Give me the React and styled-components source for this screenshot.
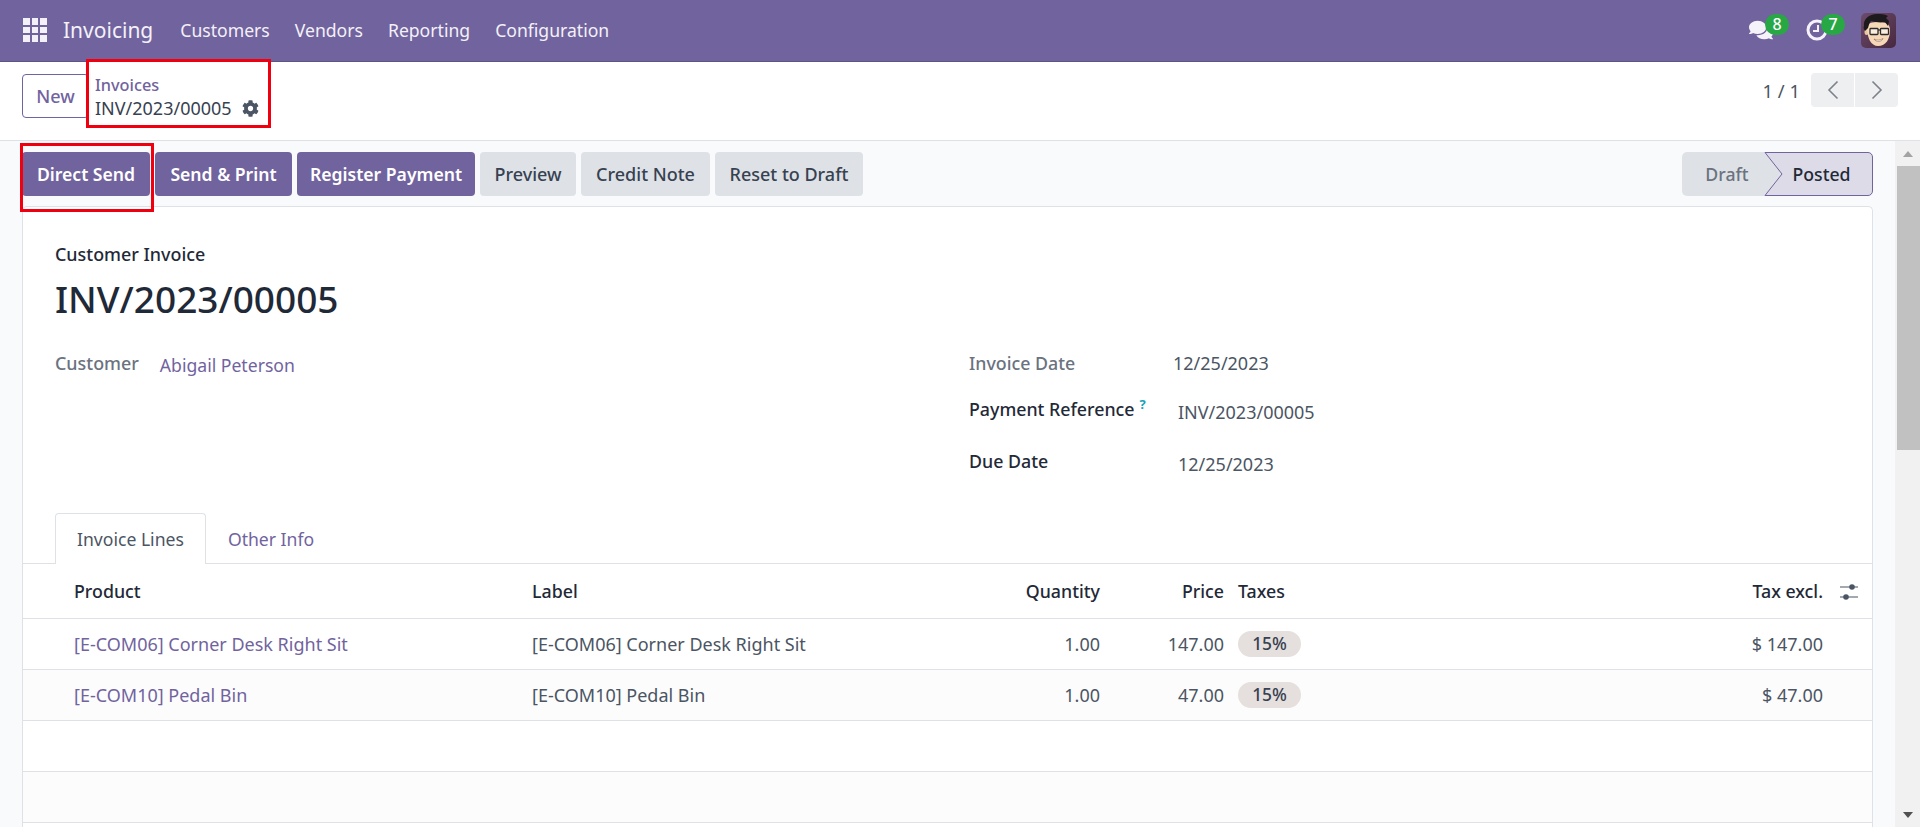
import React from 'react'
import styled, { createGlobalStyle } from 'styled-components'
import { FaCog, FaComments } from 'react-icons/fa'

const GlobalStyle = createGlobalStyle`
  html, body { margin: 0; padding: 0; height: 100%; overflow: hidden; }
  body { font-family: "Noto Sans", "Open Sans", sans-serif; font-size: 18px; color: #374151; background: #f9fafb; }
  * { box-sizing: border-box; }
`

const purple = '#71639e'

const Page = styled.div`
  position: relative;
  width: 1920px;
  height: 827px;
  display: flex;
  flex-direction: column;
  overflow: hidden;
`

const Navbar = styled.header`
  height: 62px;
  flex: none;
  display: flex;
  align-items: center;
  padding: 0 24px 1px 23px;
  background: ${purple};
  border-bottom: 1px solid #5f5386;
  color: #fff;
`

const AppGrid = styled.div`
  width: 24px;
  height: 24px;
  display: grid;
  grid-template-columns: repeat(3, 6.6px);
  grid-auto-rows: 6.6px;
  gap: 2px;
  margin-right: 16px;
  span { background: #f3f1f7; }
`

const Brand = styled.div`
  font-size: 21px;
  margin-right: 27px;
  color: #f3f1f7;
`

const MainMenu = styled.nav`
  display: flex;
  gap: 25px;
  font-size: 17.6px;
  color: #f3f1f7;
`

const Systray = styled.div`
  margin-left: auto;
  display: flex;
  align-items: center;
`

const TrayIcon = styled.div`
  position: relative;
  width: 24px;
  height: 24px;
  margin-right: 32px;
  display: flex;
  align-items: center;
  justify-content: center;
  color: #f5f3f9;
`

const Badge = styled.span`
  position: absolute;
  left: 16px;
  top: -4px;
  width: 24px;
  height: 21px;
  border-radius: 11px;
  background: #28a745;
  color: #fff;
  font-size: 16px;
  font-weight: 500;
  line-height: 20px;
  text-align: center;
`

const Avatar = styled.svg`
  width: 35px;
  height: 35px;
  display: block;
`

const ControlPanel = styled.div`
  height: 79px;
  flex: none;
  display: flex;
  align-items: flex-start;
  padding: 12px 22px 0;
  background: #fff;
  border-bottom: 1px solid #dee2e6;
`

const NewButton = styled.button`
  height: 44px;
  width: 67px;
  flex: none;
  border: 1px solid ${purple};
  border-radius: 4px;
  background: #fff;
  color: ${purple};
  font: 500 18px "Noto Sans", sans-serif;
`

const Breadcrumb = styled.div`
  margin-left: 6px;
  line-height: 23px;
`

const CrumbLink = styled.div`
  color: ${purple};
  font-size: 16.3px;
  font-weight: 500;
`

const CrumbCurrent = styled.div`
  display: flex;
  align-items: center;
  gap: 10px;
  font-size: 18px;
  color: #374151;
  svg { color: #4b5563; }
`

const Pager = styled.div`
  margin-left: auto;
  margin-top: -1px;
  display: flex;
  align-items: center;
  gap: 11px;
  font-size: 18.4px;
  color: #4b5563;
`

const PagerGroup = styled.div`
  display: flex;
  gap: 1px;
`

const PagerButton = styled.button`
  width: 43px;
  height: 34px;
  padding: 0;
  border: 0;
  border-radius: ${p => p.$side === 'left' ? '4px 0 0 4px' : '0 4px 4px 0'};
  background: #eeeff1;
  display: flex;
  align-items: center;
  justify-content: center;
`

const Body = styled.div`
  flex: 1;
  min-height: 0;
  display: flex;
`

const Content = styled.main`
  flex: 1;
  min-width: 0;
  padding: 11px 22px 0;
  background: #f9fafb;
`

const ActionBar = styled.div`
  display: flex;
  align-items: center;
  height: 44px;
  gap: 5px;
`

const ActionButton = styled.button`
  height: 44px;
  padding: 0;
  width: ${p => p.$w}px;
  border: 0;
  border-radius: 4px;
  background: ${p => p.$primary ? purple : '#dee2e6'};
  color: ${p => p.$primary ? '#fff' : '#374151'};
  font: ${p => p.$primary ? 600 : 500} ${p => p.$primary ? 17.6 : 18}px "Noto Sans", sans-serif;
`

const StatusBar = styled.div`
  margin-left: auto;
  width: 191px;
  height: 44px;
  position: relative;
  display: flex;
  font-size: 17.7px;
  font-weight: 500;
`

const StatusArrow = styled.svg`
  position: absolute;
  inset: 0;
  width: 191px;
  height: 44px;
`

const StatusLabel = styled.span`
  position: relative;
  width: ${p => p.$w}px;
  flex: none;
  line-height: 44px;
  text-align: center;
  padding-right: ${p => p.$pad}px;
  color: ${p => p.$muted ? '#6b7280' : '#1f2937'};
`

const Sheet = styled.section`
  margin-top: 10px;
  height: 640px;
  background: #fff;
  border: 1px solid #dee2e6;
  border-bottom: 0;
  border-radius: 5px 5px 0 0;
`

const Heading = styled.div`
  padding: 35px 32px 0;
`

const Eyebrow = styled.div`
  font-size: 17.9px;
  line-height: 24px;
  font-weight: 500;
  color: #1f2937;
`

const Title = styled.h1`
  margin: 8px 0 0;
  font-size: 37px;
  line-height: 50px;
  font-weight: 500;
  color: #1f2937;
`

const Columns = styled.div`
  margin-top: 27px;
  padding-left: 32px;
  display: grid;
  grid-template-columns: 914px 1fr;
  height: 162px;
`

const LeftField = styled.div`
  display: flex;
  align-items: flex-start;
  gap: 21px;
`

const GreyLabel = styled.div`
  font-size: 17.9px;
  line-height: 24px;
  font-weight: 500;
  color: #6b7280;
`

const PartnerLink = styled.div`
  font-size: 17.6px;
  line-height: 24px;
  margin-top: 2px;
  color: ${purple};
`

const FieldRow = styled.div`
  display: flex;
  height: ${p => p.$h}px;
`

const FieldLabel = styled.div`
  width: ${p => p.$w}px;
  flex: none;
  font-size: 17.8px;
  line-height: 24px;
  font-weight: 500;
  color: ${p => p.$muted ? '#6b7280' : '#1f2937'};
`

const FieldValue = styled.div`
  font-size: 18px;
  line-height: 24px;
  margin-top: ${p => p.$top}px;
  color: #4b5563;
`

const Help = styled.sup`
  font-size: 13px;
  font-weight: 700;
  color: #17a2b8;
  margin-left: 5px;
  line-height: 0;
`

const Tabs = styled.div`
  height: 51px;
  padding-left: 32px;
  display: flex;
  border-bottom: 1px solid #dee2e6;
  font-size: 17.6px;
`

const Tab = styled.div`
  height: 51px;
  line-height: ${p => p.$active ? 50 : 52}px;
  padding: 0 ${p => p.$pad}px;
  color: ${p => p.$active ? '#4b5563' : purple};
  ${p => p.$active && `
    background: #fff;
    border: 1px solid #dee2e6;
    border-bottom: 0;
    border-radius: 4px 4px 0 0;
  `}
`

const Row = styled.div`
  height: ${p => p.$h || 51}px;
  display: grid;
  grid-template-columns: 51px 458px 478px 90px 124px 14px 1fr 120px 49px;
  align-items: center;
  font-size: 18px;
  background: ${p => p.$odd ? '#fcfcfc' : '#fff'};
  border-bottom: 1px solid #dee2e6;
  color: #4b5563;
`

const HeaderRow = styled(Row)`
  font-size: 17.8px;
  color: #1f2937;
  font-weight: 500;
`

const Cell = styled.div`
  white-space: nowrap;
  text-align: ${p => p.$right ? 'right' : 'left'};
  color: ${p => p.$link ? purple : 'inherit'};
`

const TaxBadge = styled.span`
  display: inline-block;
  width: 63px;
  height: 26px;
  line-height: 25px;
  border-radius: 13px;
  background: #e5dfdd;
  color: #374151;
  font-size: 17.4px;
  font-weight: 500;
  text-align: center;
`

const OptionsIcon = styled.svg`
  width: 20px;
  height: 18px;
  display: block;
  margin-left: 16px;
`

const Scrollbar = styled.div`
  width: 25px;
  flex: none;
  display: flex;
  flex-direction: column;
  align-items: center;
  background: #f1f1f1;
`

const ArrowBtn = styled.div`
  height: 25px;
  width: 100%;
  display: flex;
  align-items: center;
  justify-content: center;
  flex: none;
`

const Tri = styled.i`
  width: 0;
  height: 0;
  border-left: 5.5px solid transparent;
  border-right: 5.5px solid transparent;
  ${p => p.$up ? 'border-bottom: 6px solid #a3a3a3;' : 'border-top: 6px solid #505050;'}
`

const Thumb = styled.div`
  width: 23px;
  margin-left: 2px;
  height: 284px;
  flex: none;
  background: #c1c1c1;
`

const Spacer = styled.div`
  flex: 1;
`

const RedBox = styled.div`
  position: absolute;
  left: ${p => p.$x}px;
  top: ${p => p.$y}px;
  width: ${p => p.$w}px;
  height: ${p => p.$h}px;
  border: 3px solid #f0000f;
  pointer-events: none;
`

const lines = [
  { code: '[E-COM06] Corner Desk Right Sit', price: '147.00', total: '$ 147.00' },
  { code: '[E-COM10] Pedal Bin', price: '47.00', total: '$ 47.00' },
]

const Chevron = ({ dir }) => (
  <svg width="14" height="20" viewBox="0 0 14 20" fill="none" stroke="#7d8288" strokeWidth="1.6">
    <path d={dir === 'left' ? 'M11.5 1.5 3 10l8.5 8.5' : 'M2.5 1.5 11 10l-8.5 8.5'} />
  </svg>
)

const ClockIcon = () => (
  <svg width="24" height="24" viewBox="0 0 24 24" fill="none" stroke="#f5f3f9">
    <circle cx="12" cy="12" r="9" strokeWidth="3" />
    <path d="M13 7v6H8" strokeWidth="2" />
  </svg>
)

const AvatarArt = () => (
  <Avatar viewBox="0 0 35 35">
    <defs>
      <linearGradient id="avatarBg" x1="0" y1="0" x2="1" y2="1">
        <stop offset="0" stopColor="#6d4c6c" />
        <stop offset="1" stopColor="#48273f" />
      </linearGradient>
    </defs>
    <rect width="35" height="35" rx="5" fill="url(#avatarBg)" />
    <ellipse cx="5.5" cy="19" rx="2" ry="3" fill="#ecc49e" />
    <path d="M6 14c0 11 4 19 11 19 8 0 12-7 12-16 0-6-4-8-11-8S6 10 6 14z" fill="#f7d8b6" />
    <path d="M3 13C2 6 8 1 16 1c4 0 7 0 11 2l-2 2 3 3-1 5-3-4c-5 1-10 0-14-1-2 2-2 4-3 7l-3 3c-1-2-2-3-1-5z" fill="#1d1a1e" />
    <rect x="9" y="15.500" width="8" height="6" rx=".8" fill="#fff" fillOpacity=".55" stroke="#2c2c2c" strokeWidth="1.3" />
    <rect x="19.500" y="15.500" width="8" height="6" rx=".8" fill="#fff" fillOpacity=".55" stroke="#2c2c2c" strokeWidth="1.3" />
    <path d="M17 17h2.500" stroke="#2c2c2c" strokeWidth="1.2" />
    <path d="M13 26c3 1.500 6 1.500 9-.5-1 3.500-7 4-9 .5z" fill="#fff" stroke="#7a4a3a" strokeWidth=".5" />
  </Avatar>
)

const SlidersArt = () => (
  <OptionsIcon viewBox="0 0 20 18" fill="#4b5563" stroke="#4b5563">
    <path d="M1 5h18M1 15h18" strokeWidth="1.2" />
    <circle cx="13" cy="5" r="2.8" stroke="none" />
    <circle cx="7" cy="15" r="2.8" stroke="none" />
  </OptionsIcon>
)

export default function App() {
  return (
    <Page>
      <GlobalStyle />
      <Navbar>
        <AppGrid>{Array.from({ length: 9 }, (_, i) => <span key={i} />)}</AppGrid>
        <Brand>Invoicing</Brand>
        <MainMenu>
          <span>Customers</span>
          <span>Vendors</span>
          <span>Reporting</span>
          <span>Configuration</span>
        </MainMenu>
        <Systray>
          <TrayIcon>
            <FaComments size={24} />
            <Badge>8</Badge>
          </TrayIcon>
          <TrayIcon>
            <ClockIcon />
            <Badge>7</Badge>
          </TrayIcon>
          <AvatarArt />
        </Systray>
      </Navbar>

      <ControlPanel>
        <NewButton>New</NewButton>
        <Breadcrumb>
          <CrumbLink>Invoices</CrumbLink>
          <CrumbCurrent>INV/2023/00005 <FaCog size={17} /></CrumbCurrent>
        </Breadcrumb>
        <Pager>
          <span>1 / 1</span>
          <PagerGroup>
            <PagerButton $side="left"><Chevron dir="left" /></PagerButton>
            <PagerButton $side="right"><Chevron dir="right" /></PagerButton>
          </PagerGroup>
        </Pager>
      </ControlPanel>

      <Body>
        <Content>
          <ActionBar>
            <ActionButton $primary $w={128}>Direct Send</ActionButton>
            <ActionButton $primary $w={137}>Send &amp; Print</ActionButton>
            <ActionButton $primary $w={178}>Register Payment</ActionButton>
            <ActionButton $w={96}>Preview</ActionButton>
            <ActionButton $w={129}>Credit Note</ActionButton>
            <ActionButton $w={148}>Reset to Draft</ActionButton>
            <StatusBar>
              <StatusArrow viewBox="0 0 191 44">
                <path d="M5 0h79l17 22-17 22H5a5 5 0 0 1-5-5V5a5 5 0 0 1 5-5z" fill="#dee2e6" />
                <path d="M83 .5h103a4.5 4.5 0 0 1 4.5 4.5v34a4.5 4.5 0 0 1-4.5 4.5H83L100 22z" fill="#dedbe8" stroke={purple} />
              </StatusArrow>
              <StatusLabel $muted $w={101} $pad={11}>Draft</StatusLabel>
              <StatusLabel $w={90} $pad={13}>Posted</StatusLabel>
            </StatusBar>
          </ActionBar>

          <Sheet>
            <Heading>
              <Eyebrow>Customer Invoice</Eyebrow>
              <Title>INV/2023/00005</Title>
            </Heading>
            <Columns>
              <LeftField>
                <GreyLabel>Customer</GreyLabel>
                <PartnerLink>Abigail Peterson</PartnerLink>
              </LeftField>
              <div>
                <FieldRow $h={46}>
                  <FieldLabel $muted $w={204}>Invoice Date</FieldLabel>
                  <FieldValue $top={0}>12/25/2023</FieldValue>
                </FieldRow>
                <FieldRow $h={52}>
                  <FieldLabel $w={209}>Payment Reference<Help>?</Help></FieldLabel>
                  <FieldValue $top={3}>INV/2023/00005</FieldValue>
                </FieldRow>
                <FieldRow $h={50}>
                  <FieldLabel $w={209}>Due Date</FieldLabel>
                  <FieldValue $top={3}>12/25/2023</FieldValue>
                </FieldRow>
              </div>
            </Columns>
            <Tabs>
              <Tab $active $pad={21}>Invoice Lines</Tab>
              <Tab $pad={22}>Other Info</Tab>
            </Tabs>
            <HeaderRow $h={55}>
              <span />
              <Cell>Product</Cell>
              <Cell>Label</Cell>
              <Cell $right>Quantity</Cell>
              <Cell $right>Price</Cell>
              <span />
              <Cell>Taxes</Cell>
              <Cell $right>Tax excl.</Cell>
              <SlidersArt />
            </HeaderRow>
            {lines.map((line, i) => (
              <Row key={line.code} $odd={i % 2 === 1}>
                <span />
                <Cell $link>{line.code}</Cell>
                <Cell>{line.code}</Cell>
                <Cell $right>1.00</Cell>
                <Cell $right>{line.price}</Cell>
                <span />
                <Cell><TaxBadge>15%</TaxBadge></Cell>
                <Cell $right>{line.total}</Cell>
                <span />
              </Row>
            ))}
            <Row />
            <Row $odd />
          </Sheet>
        </Content>
        <Scrollbar>
          <ArrowBtn><Tri $up /></ArrowBtn>
          <Thumb />
          <Spacer />
          <ArrowBtn><Tri /></ArrowBtn>
        </Scrollbar>
      </Body>

      <RedBox $x={86} $y={59} $w={185} $h={69} />
      <RedBox $x={20} $y={143} $w={134} $h={69} />
    </Page>
  )
}
